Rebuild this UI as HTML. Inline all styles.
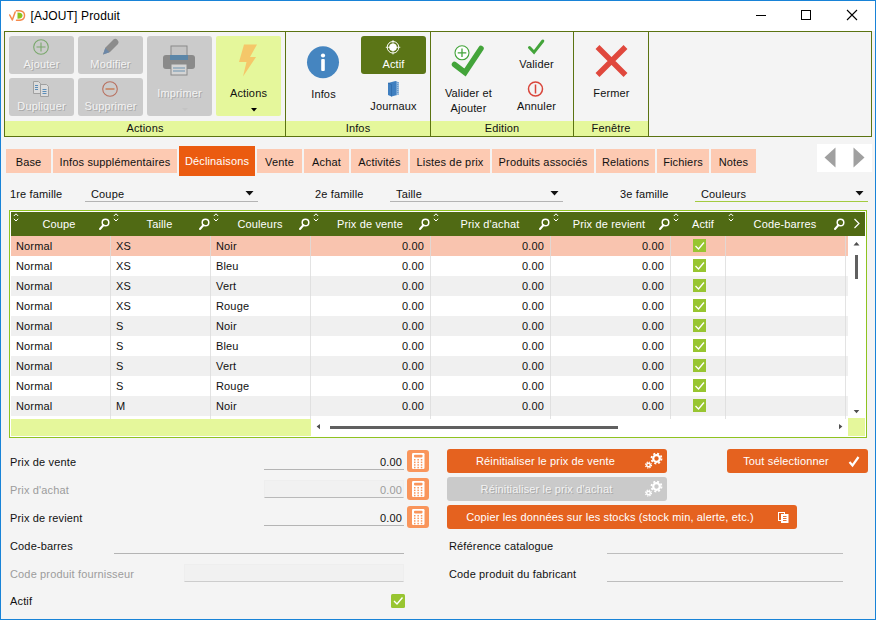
<!DOCTYPE html>
<html><head><meta charset="utf-8">
<style>
*{box-sizing:border-box;margin:0;padding:0}
html,body{width:876px;height:620px;overflow:hidden}
body{position:relative;background:#f4f4f4;font-family:"Liberation Sans",sans-serif;font-size:11px;color:#111;letter-spacing:0.15px}
.a{position:absolute}
.t{position:absolute;white-space:nowrap;line-height:14px;height:14px}
.c{text-align:center}
.r{text-align:right}
#frame{left:0;top:0;width:876px;height:620px;border:1px solid #1883d7;border-top-color:#1883d7;z-index:50;pointer-events:none}
#titlebar{left:1px;top:1px;width:874px;height:30px;background:#fff}
#ribbon{left:4px;top:31px;width:868px;height:106px;border:1px solid #5b7311;background:#f4f4f4}
.band{background:#e5f79b;top:121px;height:15px}
.gsep{background:#5b7311;width:1px;top:32px;height:104px}
.dis{background:#cbcbcb;border-radius:3px}
.dis .t,.distxt{color:#f3f3f3;text-shadow:1px 1px 0 #a9a9a9}
.tab{background:#fdcab2;top:149px;height:24px}
.tab .t{top:6px;left:0;width:100%;text-align:center}
.ul{height:1px;background:#b4b4b4}
.btn{background:#e5621f;border-radius:3px;color:#fff}
.calc{background:#f9955b;border-radius:3px;width:22px;height:22px}
</style></head><body>
<div class="a" id="titlebar"></div>
<div class="a" id="ribbon"></div>
<!-- TITLE -->
<div class="t" style="left:30.500px;top:9px;font-size:12px;color:#000">[AJOUT] Produit</div>
<!-- RIBBON -->
<div class="a band" style="left:5px;width:280px"></div>
<div class="a band" style="left:286px;width:144px"></div>
<div class="a band" style="left:431px;width:142px"></div>
<div class="a band" style="left:574px;width:74px"></div>
<div class="a gsep" style="left:285px"></div>
<div class="a gsep" style="left:430px"></div>
<div class="a gsep" style="left:573px"></div>
<div class="a gsep" style="left:648px"></div>
<div class="t c" style="left:5px;width:280px;top:121px">Actions</div>
<div class="t c" style="left:286px;width:144px;top:121px">Infos</div>
<div class="t c" style="left:431px;width:142px;top:121px">Edition</div>
<div class="t c" style="left:574px;width:74px;top:121px">Fenêtre</div>

<div class="a dis" style="left:9px;top:36px;width:65px;height:38px"></div>
<div class="a dis" style="left:78px;top:36px;width:65px;height:38px"></div>
<div class="a dis" style="left:9px;top:78px;width:65px;height:38px"></div>
<div class="a dis" style="left:78px;top:78px;width:65px;height:38px"></div>
<div class="a dis" style="left:147px;top:36px;width:65px;height:80px"></div>
<div class="a" style="left:216px;top:36px;width:65px;height:80px;background:#e5f79b;border-radius:2px"></div>
<div class="t c distxt" style="left:9px;width:65px;top:57px">Ajouter</div>
<div class="t c distxt" style="left:78px;width:65px;top:57px">Modifier</div>
<div class="t c distxt" style="left:9px;width:65px;top:99px">Dupliquer</div>
<div class="t c distxt" style="left:78px;width:65px;top:99px">Supprimer</div>
<div class="t c distxt" style="left:147px;width:65px;top:86px">Imprimer</div>
<div class="t c" style="left:216px;width:65px;top:86px">Actions</div>
<svg class="a" style="left:0;top:0" width="876" height="140" viewBox="0 0 876 140">
 <!-- logo -->
 <g id="logo" fill="none" stroke="#f58a4b" stroke-width="1.500" stroke-linecap="round" stroke-linejoin="round"><path d="M9.700 15 L12.300 20 L15.200 12"/><path d="M16.500 10.800 Q24.500 10 24.500 15.500 Q24.500 21 16.500 20.200" stroke-dasharray="2.200 .6"/></g>
 <path d="M17.500 12.500 L17.500 18.800 Q22.500 18.800 22.500 15.600 Q22.500 12.500 17.500 12.500Z" fill="#8cc21f"/>
 <!-- window controls -->
 <path d="M756 15.500 H766" stroke="#000" stroke-width="1"/>
 <rect x="801.500" y="10.500" width="9" height="9" fill="none" stroke="#000" stroke-width="1"/>
 <path d="M847 10 L857 20 M857 10 L847 20" stroke="#000" stroke-width="1.100"/>
 <!-- plus circle -->
 <g fill="none" stroke="#7aa86c" stroke-width="1.100"><circle cx="41" cy="47" r="7.300"/><path d="M41 42.5V51.5M36.5 47H45.5"/></g>
 <!-- pencil -->
 <g id="pencil"><path d="M103 54.500 L105.500 47.500 L113.500 39.500 Q115.500 38 117.500 40 Q119.500 42 118 44 L110 52 Z" fill="#8c8c8c"/><path d="M103 54.500 L105.300 48 L109.500 52.200 Z" fill="#6c88a8"/></g>
 <!-- duplicate -->
 <g id="dup"><path d="M33.500 81.500h5l2 2v10h-7z" fill="#dcdcdc" stroke="#a0a0a0" stroke-width="1"/><path d="M40.500 84.500h6l2 2v10h-8z" fill="#dcdcdc" stroke="#a0a0a0" stroke-width="1"/><path d="M35 85.500h3M35 87.500h3M35 89.500h3M42.500 89.500h4M42.500 91.500h4M42.500 93.500h4" stroke="#5b8db8" stroke-width="1"/></g>
 <!-- minus circle -->
 <g fill="none" stroke="#b8705f" stroke-width="1.100"><circle cx="110" cy="89" r="7.300"/><path d="M105.500 89H114.500" stroke="#c9794f" stroke-width="1.400"/></g>
 <!-- printer -->
 <g id="printer"><rect x="171" y="46" width="16" height="12" fill="#c4c4c4" stroke="#8a8a8a" stroke-width="1"/><rect x="163" y="55" width="32" height="14" rx="3" fill="#8a8a8a"/><rect x="170" y="55" width="18" height="5" fill="#5b86a8"/><rect x="171" y="64" width="16" height="11" fill="#d4d4d4" stroke="#8a8a8a" stroke-width="1"/><path d="M173 68h12M173 71h12" stroke="#6d93b0" stroke-width="1"/></g>
 <path d="M182 108 h6 l-3 3z" fill="#c4c4c4"/>
 <!-- lightning -->
 <path d="M244 44.500 L257 44.500 L250 57 L256 57 L243 76.500 L246.500 62 L239 62 Z" fill="#f5c769"/>
 <path d="M251 108 h6 l-3 3.500z" fill="#000"/>
 <!-- info -->
 <circle cx="323" cy="62.200" r="16" fill="#4585c0"/>
 <circle cx="323" cy="55.500" r="2.100" fill="#fff"/><rect x="321.200" y="59" width="3.600" height="12" rx="1" fill="#fff"/>
 <!-- actif -->
 <rect x="361" y="36" width="65" height="38" rx="3" fill="#5b7516"/>
 <g stroke="#fff" fill="none" stroke-width="1"><circle cx="393" cy="47.300" r="5.800"/><path d="M393 40v14.500M385.800 47.300h14.500" stroke-width=".8"/></g>
 <circle cx="393" cy="47.300" r="3.800" fill="#fff"/>
 <!-- book -->
 <g id="book"><path d="M388 83 L395.500 81 L399 82.500 L399 94.500 L391.500 96.500 L388 95Z" fill="#3f7fc0"/><path d="M396.500 82 L399 83 L399 94.500 L396.500 95.200Z" fill="#9dbfe0"/><path d="M397.800 84v10" stroke="#3f7fc0" stroke-width=".8" stroke-dasharray="1 1"/><path d="M388 83 L391.500 84.500 L391.500 96.500" stroke="#2f6aa8" fill="none" stroke-width=".8"/></g>
 <!-- big check -->
 <path d="M454.500 64.500 L465 72.500 L481 48.500" fill="none" stroke="#43a43a" stroke-width="5.500" stroke-linecap="round" stroke-linejoin="miter"/>
 <circle cx="462" cy="52.800" r="7" fill="#fff" stroke="#43a43a" stroke-width="1.100"/><path d="M462 48.500v8.600M457.700 52.800h8.600" stroke="#43a43a" stroke-width="1.300"/>
 <!-- small check -->
 <path d="M529.500 47.500 L534 52.300 L542.800 41" fill="none" stroke="#43a43a" stroke-width="3" stroke-linecap="round"/>
 <!-- annuler -->
 <g fill="none" stroke="#d9453a" stroke-width="1.500"><circle cx="535.500" cy="89" r="7"/><path d="M535.500 84.500v9"/></g>
 <!-- X -->
 <path d="M597.500 47 L625.500 75 M625.500 47 L597.500 75" stroke="#e0483d" stroke-width="5.500"/>
</svg>
<div class="t c" style="left:291px;width:65px;top:87px">Infos</div>
<div class="t c" style="left:361px;width:65px;top:57px;color:#fff">Actif</div>
<div class="t c" style="left:361px;width:65px;top:99px">Journaux</div>
<div class="t c" style="left:436px;width:65px;top:86px">Valider et</div>
<div class="t c" style="left:436px;width:65px;top:101px">Ajouter</div>
<div class="t c" style="left:504px;width:65px;top:57px">Valider</div>
<div class="t c" style="left:504px;width:65px;top:99px">Annuler</div>
<div class="t c" style="left:579px;width:65px;top:86px">Fermer</div>
<div class="a tab" style="left:6px;width:45px"><div class="t">Base</div></div>
<div class="a tab" style="left:53px;width:124px"><div class="t">Infos supplémentaires</div></div>
<div class="a" style="left:179px;top:146px;width:76px;height:30px;background:#eb5b10"><div class="t c" style="left:0;width:100%;top:8px;color:#fff">Déclinaisons</div></div>
<div class="a tab" style="left:257px;width:45px"><div class="t">Vente</div></div>
<div class="a tab" style="left:304px;width:45px"><div class="t">Achat</div></div>
<div class="a tab" style="left:351px;width:57px"><div class="t">Activités</div></div>
<div class="a tab" style="left:410px;width:80px"><div class="t">Listes de prix</div></div>
<div class="a tab" style="left:492px;width:102px"><div class="t">Produits associés</div></div>
<div class="a tab" style="left:596px;width:59px"><div class="t">Relations</div></div>
<div class="a tab" style="left:657px;width:52px"><div class="t">Fichiers</div></div>
<div class="a tab" style="left:711px;width:45px"><div class="t">Notes</div></div>
<div class="a" style="left:817px;top:144px;width:55px;height:28px;background:#fff"></div>
<svg class="a" style="left:817px;top:144px" width="55" height="29"><path d="M18.500 3.500 L18.500 23.500 L7.500 13.500Z" fill="#a0a0a0"/><path d="M36.500 3.500 L36.500 23.500 L47.500 13.500Z" fill="#a0a0a0"/></svg>


<div class="t" style="left:10px;top:187px">1re famille</div>
<div class="t" style="left:91px;top:187px">Coupe</div>
<div class="a ul" style="left:85px;top:201px;width:173px"></div>
<div class="t" style="left:315px;top:187px">2e famille</div>
<div class="t" style="left:396px;top:187px">Taille</div>
<div class="a ul" style="left:390px;top:201px;width:173px"></div>
<div class="t" style="left:620px;top:187px">3e famille</div>
<div class="t" style="left:701px;top:187px">Couleurs</div>
<div class="a ul" style="left:695px;top:201px;width:173px;background:#a3cb3f"></div>
<svg class="a" style="left:0;top:185px" width="876" height="16"><path d="M245.500 6h8l-4 4.500z M550.500 6h8l-4 4.500z M855.500 6h8l-4 4.500z" fill="#111"/></svg>

<div class="a" style="left:9px;top:210px;width:858px;height:228px;border:1px solid #8fc320;background:#fff"></div>
<div class="a" style="left:11px;top:212px;width:854px;height:24px;background:#506a14"></div>
<div class="a" style="left:11px;top:236px;width:837px;height:20px;background:#f9c4af"></div>
<div class="t" style="left:16px;top:239px">Normal</div><div class="t" style="left:116px;top:239px">XS</div><div class="t" style="left:216px;top:239px">Noir</div><div class="t r" style="left:364px;width:60px;top:239px">0.00</div><div class="t r" style="left:484px;width:60px;top:239px">0.00</div><div class="t r" style="left:604px;width:60px;top:239px">0.00</div>
<div class="a" style="left:11px;top:256px;width:837px;height:20px;background:#fff"></div>
<div class="t" style="left:16px;top:259px">Normal</div><div class="t" style="left:116px;top:259px">XS</div><div class="t" style="left:216px;top:259px">Bleu</div><div class="t r" style="left:364px;width:60px;top:259px">0.00</div><div class="t r" style="left:484px;width:60px;top:259px">0.00</div><div class="t r" style="left:604px;width:60px;top:259px">0.00</div>
<div class="a" style="left:11px;top:276px;width:837px;height:20px;background:#f0f0f0"></div>
<div class="t" style="left:16px;top:279px">Normal</div><div class="t" style="left:116px;top:279px">XS</div><div class="t" style="left:216px;top:279px">Vert</div><div class="t r" style="left:364px;width:60px;top:279px">0.00</div><div class="t r" style="left:484px;width:60px;top:279px">0.00</div><div class="t r" style="left:604px;width:60px;top:279px">0.00</div>
<div class="a" style="left:11px;top:296px;width:837px;height:20px;background:#fff"></div>
<div class="t" style="left:16px;top:299px">Normal</div><div class="t" style="left:116px;top:299px">XS</div><div class="t" style="left:216px;top:299px">Rouge</div><div class="t r" style="left:364px;width:60px;top:299px">0.00</div><div class="t r" style="left:484px;width:60px;top:299px">0.00</div><div class="t r" style="left:604px;width:60px;top:299px">0.00</div>
<div class="a" style="left:11px;top:316px;width:837px;height:20px;background:#f0f0f0"></div>
<div class="t" style="left:16px;top:319px">Normal</div><div class="t" style="left:116px;top:319px">S</div><div class="t" style="left:216px;top:319px">Noir</div><div class="t r" style="left:364px;width:60px;top:319px">0.00</div><div class="t r" style="left:484px;width:60px;top:319px">0.00</div><div class="t r" style="left:604px;width:60px;top:319px">0.00</div>
<div class="a" style="left:11px;top:336px;width:837px;height:20px;background:#fff"></div>
<div class="t" style="left:16px;top:339px">Normal</div><div class="t" style="left:116px;top:339px">S</div><div class="t" style="left:216px;top:339px">Bleu</div><div class="t r" style="left:364px;width:60px;top:339px">0.00</div><div class="t r" style="left:484px;width:60px;top:339px">0.00</div><div class="t r" style="left:604px;width:60px;top:339px">0.00</div>
<div class="a" style="left:11px;top:356px;width:837px;height:20px;background:#f0f0f0"></div>
<div class="t" style="left:16px;top:359px">Normal</div><div class="t" style="left:116px;top:359px">S</div><div class="t" style="left:216px;top:359px">Vert</div><div class="t r" style="left:364px;width:60px;top:359px">0.00</div><div class="t r" style="left:484px;width:60px;top:359px">0.00</div><div class="t r" style="left:604px;width:60px;top:359px">0.00</div>
<div class="a" style="left:11px;top:376px;width:837px;height:20px;background:#fff"></div>
<div class="t" style="left:16px;top:379px">Normal</div><div class="t" style="left:116px;top:379px">S</div><div class="t" style="left:216px;top:379px">Rouge</div><div class="t r" style="left:364px;width:60px;top:379px">0.00</div><div class="t r" style="left:484px;width:60px;top:379px">0.00</div><div class="t r" style="left:604px;width:60px;top:379px">0.00</div>
<div class="a" style="left:11px;top:396px;width:837px;height:20px;background:#f0f0f0"></div>
<div class="t" style="left:16px;top:399px">Normal</div><div class="t" style="left:116px;top:399px">M</div><div class="t" style="left:216px;top:399px">Noir</div><div class="t r" style="left:364px;width:60px;top:399px">0.00</div><div class="t r" style="left:484px;width:60px;top:399px">0.00</div><div class="t r" style="left:604px;width:60px;top:399px">0.00</div>
<div class="a" style="left:110px;top:236px;width:1px;height:183px;background:#dcdcdc;opacity:.8"></div>
<div class="a" style="left:210px;top:236px;width:1px;height:183px;background:#dcdcdc;opacity:.8"></div>
<div class="a" style="left:310px;top:236px;width:1px;height:183px;background:#dcdcdc;opacity:.8"></div>
<div class="a" style="left:430px;top:236px;width:1px;height:183px;background:#dcdcdc;opacity:.8"></div>
<div class="a" style="left:550px;top:236px;width:1px;height:183px;background:#dcdcdc;opacity:.8"></div>
<div class="a" style="left:670px;top:236px;width:1px;height:183px;background:#dcdcdc;opacity:.8"></div>
<div class="a" style="left:725px;top:236px;width:1px;height:183px;background:#dcdcdc;opacity:.8"></div>
<div class="a" style="left:845px;top:236px;width:1px;height:183px;background:#dcdcdc;opacity:.8"></div>
<div class="t c" style="left:-1px;width:120px;top:217px;color:#fff">Coupe</div>
<div class="t c" style="left:99.500px;width:120px;top:217px;color:#fff">Taille</div>
<div class="t c" style="left:200px;width:120px;top:217px;color:#fff">Couleurs</div>
<div class="t c" style="left:310px;width:120px;top:217px;color:#fff">Prix de vente</div>
<div class="t c" style="left:430px;width:120px;top:217px;color:#fff">Prix d'achat</div>
<div class="t c" style="left:549px;width:120px;top:217px;color:#fff">Prix de revient</div>
<div class="t c" style="left:643px;width:120px;top:217px;color:#fff">Actif</div>
<div class="t c" style="left:725px;width:120px;top:217px;color:#fff">Code-barres</div>
<div class="a" style="left:11px;top:419px;width:300px;height:17px;background:#e5f79b"></div>
<div class="a" style="left:848px;top:418px;width:17px;height:18px;background:#e5f79b"></div>
<div class="a" style="left:330px;top:426px;width:288px;height:3px;background:#606060"></div>
<div class="a" style="left:855px;top:255px;width:3px;height:24px;background:#606060"></div>
<svg class="a" style="left:0;top:205px" width="876" height="235" viewBox="0 205 876 235">
<path d="M13.8 216l2.200-2.200 2.200 2.200M13.8 218.800l2.200 2.200 2.200-2.200" fill="none" stroke="#fff" stroke-width="1"/><circle cx="105.5" cy="222.500" r="3.300" fill="none" stroke="#fff" stroke-width="1.500"/><path d="M103.5 225l-3.500 4" stroke="#fff" stroke-width="2" stroke-linecap="round"/>
<path d="M113.8 216l2.200-2.200 2.200 2.200M113.8 218.800l2.200 2.200 2.200-2.200" fill="none" stroke="#fff" stroke-width="1"/><circle cx="205.5" cy="222.500" r="3.300" fill="none" stroke="#fff" stroke-width="1.500"/><path d="M203.5 225l-3.500 4" stroke="#fff" stroke-width="2" stroke-linecap="round"/>
<path d="M213.8 216l2.200-2.200 2.200 2.200M213.8 218.800l2.200 2.200 2.200-2.200" fill="none" stroke="#fff" stroke-width="1"/><circle cx="305.5" cy="222.500" r="3.300" fill="none" stroke="#fff" stroke-width="1.500"/><path d="M303.5 225l-3.500 4" stroke="#fff" stroke-width="2" stroke-linecap="round"/>
<path d="M313.8 216l2.200-2.200 2.200 2.200M313.8 218.800l2.200 2.200 2.200-2.200" fill="none" stroke="#fff" stroke-width="1"/><circle cx="425.5" cy="222.500" r="3.300" fill="none" stroke="#fff" stroke-width="1.500"/><path d="M423.5 225l-3.500 4" stroke="#fff" stroke-width="2" stroke-linecap="round"/>
<path d="M433.8 216l2.200-2.200 2.200 2.200M433.8 218.800l2.200 2.200 2.200-2.200" fill="none" stroke="#fff" stroke-width="1"/><circle cx="545.5" cy="222.500" r="3.300" fill="none" stroke="#fff" stroke-width="1.500"/><path d="M543.5 225l-3.500 4" stroke="#fff" stroke-width="2" stroke-linecap="round"/>
<path d="M553.8 216l2.200-2.200 2.200 2.200M553.8 218.800l2.200 2.200 2.200-2.200" fill="none" stroke="#fff" stroke-width="1"/><circle cx="665.5" cy="222.500" r="3.300" fill="none" stroke="#fff" stroke-width="1.500"/><path d="M663.5 225l-3.500 4" stroke="#fff" stroke-width="2" stroke-linecap="round"/>
<path d="M673.8 216l2.200-2.200 2.200 2.200M673.8 218.800l2.200 2.200 2.200-2.200" fill="none" stroke="#fff" stroke-width="1"/>
<path d="M728.8 216l2.200-2.200 2.200 2.200M728.8 218.800l2.200 2.200 2.200-2.200" fill="none" stroke="#fff" stroke-width="1"/><circle cx="840.5" cy="222.500" r="3.300" fill="none" stroke="#fff" stroke-width="1.500"/><path d="M838.5 225l-3.500 4" stroke="#fff" stroke-width="2" stroke-linecap="round"/>
<path d="M854.500 219l4.500 4.500-4.500 4.500" fill="none" stroke="#fff" stroke-width="1.200"/>
<rect x="693" y="239" width="13" height="13" fill="#98c531"/><path d="M695.500 246.0l3 3 5.500-6.500" fill="none" stroke="#fff" stroke-width="1.300"/>
<rect x="693" y="259" width="13" height="13" fill="#98c531"/><path d="M695.500 266.0l3 3 5.500-6.500" fill="none" stroke="#fff" stroke-width="1.300"/>
<rect x="693" y="279" width="13" height="13" fill="#98c531"/><path d="M695.500 286.0l3 3 5.500-6.500" fill="none" stroke="#fff" stroke-width="1.300"/>
<rect x="693" y="299" width="13" height="13" fill="#98c531"/><path d="M695.500 306.0l3 3 5.500-6.500" fill="none" stroke="#fff" stroke-width="1.300"/>
<rect x="693" y="319" width="13" height="13" fill="#98c531"/><path d="M695.500 326.0l3 3 5.500-6.500" fill="none" stroke="#fff" stroke-width="1.300"/>
<rect x="693" y="339" width="13" height="13" fill="#98c531"/><path d="M695.500 346.0l3 3 5.500-6.500" fill="none" stroke="#fff" stroke-width="1.300"/>
<rect x="693" y="359" width="13" height="13" fill="#98c531"/><path d="M695.500 366.0l3 3 5.500-6.500" fill="none" stroke="#fff" stroke-width="1.300"/>
<rect x="693" y="379" width="13" height="13" fill="#98c531"/><path d="M695.500 386.0l3 3 5.500-6.500" fill="none" stroke="#fff" stroke-width="1.300"/>
<rect x="693" y="399" width="13" height="13" fill="#98c531"/><path d="M695.500 406.0l3 3 5.500-6.500" fill="none" stroke="#fff" stroke-width="1.300"/>
<path d="M853.500 245.500h6l-3-3.500z M853.700 410h5.600l-2.800 3.200z M320 424v5.200l-3.400-2.600z M839 424v5.200l3.400-2.600z" fill="#4f4f4f"/>
</svg>


<div class="t" style="left:10px;top:455px">Prix de vente</div>
<div class="t" style="left:10px;top:483px;color:#9c9c9c">Prix d'achat</div>
<div class="t" style="left:10px;top:511px">Prix de revient</div>
<div class="t" style="left:10px;top:539px">Code-barres</div>
<div class="t" style="left:10px;top:567px;color:#9c9c9c">Code produit fournisseur</div>
<div class="t" style="left:10px;top:594px">Actif</div>
<div class="a ul" style="left:264px;top:469px;width:140px"></div>
<div class="a" style="left:264px;top:480px;width:140px;height:18px;background:#f1f1f1;border:1px solid #eeeeee;border-bottom:1px solid #b9b9b9"></div>
<div class="a ul" style="left:264px;top:525px;width:140px"></div>
<div class="a ul" style="left:114px;top:553px;width:290px"></div>
<div class="a" style="left:184px;top:564px;width:220px;height:18px;background:#f1f1f1;border:1px solid #eeeeee;border-bottom:1px solid #cdcdcd"></div>
<div class="t r" style="left:342px;width:60px;top:455px">0.00</div>
<div class="t r" style="left:342px;width:60px;top:483px;color:#9c9c9c">0.00</div>
<div class="t r" style="left:342px;width:60px;top:511px">0.00</div>
<div class="a calc" style="left:407px;top:450px"></div>
<div class="a calc" style="left:407px;top:478px"></div>
<div class="a calc" style="left:407px;top:506px"></div>
<div class="a btn" style="left:447px;top:449px;width:220px;height:24px"></div>
<div class="a" style="left:447px;top:477px;width:220px;height:24px;background:#cacaca;border-radius:3px"></div>
<div class="a btn" style="left:447px;top:505px;width:350px;height:24px"></div>
<div class="a btn" style="left:727px;top:449px;width:141px;height:24px"></div>
<div class="t c" style="left:447px;width:197px;top:454px;color:#fff">Réinitialiser le prix de vente</div>
<div class="t c distxt" style="left:447px;width:199px;top:482px">Réinitialiser le prix d'achat</div>
<div class="t c" style="left:447px;width:326px;top:510px;color:#fff">Copier les données sur les stocks (stock min, alerte, etc.)</div>
<div class="t c" style="left:727px;width:118px;top:454px;color:#fff">Tout sélectionner</div>
<div class="t" style="left:449px;top:539px">Référence catalogue</div>
<div class="t" style="left:449px;top:567px">Code produit du fabricant</div>
<div class="a ul" style="left:607px;top:553px;width:236px;background:#bdbdbd"></div>
<div class="a ul" style="left:607px;top:581px;width:236px;background:#bdbdbd"></div>
<svg class="a" style="left:0;top:440px" width="876" height="180" viewBox="0 440 876 180">
<defs>
<g id="calc"><rect x="-6" y="-8" width="12.500" height="16" rx="1.200" fill="#fff"/><rect x="-4" y="-6.200" width="8.500" height="2.600" rx=".8" fill="#f9955b"/><rect x="-4.0" y="-2.0" width="1.500" height="1.500" fill="#f9955b"/><rect x="-0.6" y="-2.0" width="1.500" height="1.500" fill="#f9955b"/><rect x="2.8" y="-2.0" width="1.500" height="1.500" fill="#f9955b"/><rect x="-4.0" y="0.6" width="1.500" height="1.500" fill="#f9955b"/><rect x="-0.6" y="0.6" width="1.500" height="1.500" fill="#f9955b"/><rect x="2.8" y="0.6" width="1.500" height="1.500" fill="#f9955b"/><rect x="-4.0" y="3.2" width="1.500" height="1.500" fill="#f9955b"/><rect x="-0.6" y="3.2" width="1.500" height="1.500" fill="#f9955b"/><rect x="2.8" y="3.2" width="1.500" height="1.500" fill="#f9955b"/><rect x="-4.0" y="5.8" width="1.500" height="1.500" fill="#f9955b"/><rect x="-0.6" y="5.8" width="1.500" height="1.500" fill="#f9955b"/><rect x="2.8" y="5.8" width="1.500" height="1.500" fill="#f9955b"/></g>
<g id="gears"><circle cx="4.500" cy="-3" r="3.300" fill="none" stroke="#fff" stroke-width="2.200"/><circle cx="4.500" cy="-3" r="5" fill="none" stroke="#fff" stroke-width="1.800" stroke-dasharray="2 1.930"/><circle cx="-3.500" cy="3.500" r="1.800" fill="none" stroke="#fff" stroke-width="1.400"/><circle cx="-3.500" cy="3.500" r="3" fill="none" stroke="#fff" stroke-width="1.200" stroke-dasharray="1.300 1.060"/></g>
</defs>
<use href="#calc" x="418" y="461"/><use href="#calc" x="418" y="489"/><use href="#calc" x="418" y="517"/>
<use href="#gears" x="652" y="461.500"/><use href="#gears" x="652" y="489.500"/>
<path d="M849.500 462l3 3.500 6-8.500" fill="none" stroke="#fff" stroke-width="2.200"/>
<g id="copy" stroke="#fff" fill="none" stroke-width="1"><rect x="778.500" y="512.500" width="6" height="8"/><rect x="781.500" y="514.500" width="6.500" height="8" fill="#fff"/><path d="M783 516.500h3.500M783 518.500h3.500M783 520.500h3.500" stroke="#e5621f" stroke-width=".9"/></g>
<rect x="391" y="594" width="14" height="14" rx="1.500" fill="#98c531"/><path d="M394 601l3 3 5.500-6.500" fill="none" stroke="#fff" stroke-width="1.400"/>
</svg>

<div class="a" id="frame"></div>
</body></html>
